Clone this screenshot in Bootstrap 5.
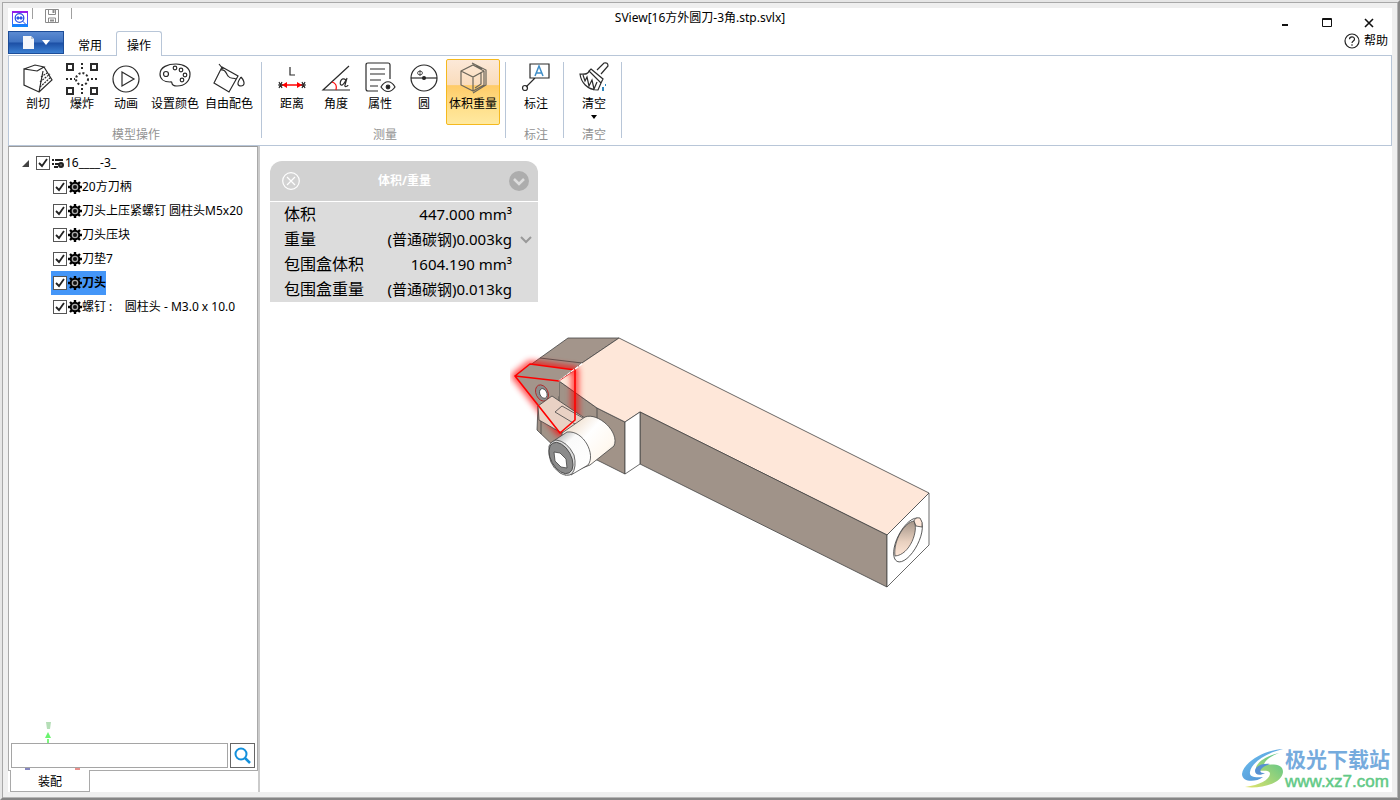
<!DOCTYPE html>
<html lang="zh-CN">
<head>
<meta charset="utf-8">
<meta name="viewport" content="width=device-width, initial-scale=1">
<title>SView[16方外圆刀-3角.stp.svlx]</title>
<link rel="stylesheet" href="https://cdn.jsdelivr.net/npm/bootstrap@5.3.0/dist/css/bootstrap.min.css">
<style>
:root { --line: #b8c6d8; --edge: #a9a9a9; }
body { font: 12px/16px "Noto Sans", "Noto Sans CJK SC", sans-serif; color: #000; background: #efefef; }
button { color: inherit; }
svg { display: block; flex: none; }
.window-frame { border: 2px solid #e6e6e6; border-right-color: #8c8c8c; border-bottom-color: #858585; box-shadow: inset 1px 1px #a8a8a8, inset -1px -1px #b5b5b5; padding: 6px; }
.title-row { display: grid; grid-template-columns: 1fr auto 1fr; height: 23px; }
.title-row h1 { font-size: 12px; font-weight: 400; line-height: 20px; margin: 0; }
.quick-sep { width: 1px; height: 11px; background: #a0a0a0; }
.plain-btn { border: 0; background: none; padding: 0; }
.tab-row { height: 24px; }
.file-btn { width: 56px; height: 23px; border: 1px solid #1d4d98; border-radius: 0; background: linear-gradient(#5b8ad1 0, #3f73c2 48%, #1c4fa5 52%, #3b7fd2 100%); }
.ribbon-tabs .nav-link { height: 24px; color: #000; padding: 5px 9px 0; border: 1px solid transparent; border-bottom: 0; border-radius: 3px 3px 0 0; line-height: 18px; }
.ribbon-tabs .nav-link.active { background: #fff; border-color: var(--line); height: 25px; margin-bottom: -1px; position: relative; padding: 5px 10px 0; }
.ribbon { border: 1px solid var(--line); height: 91px; }
.tool-group { margin: 6px 0 7px; padding: 0 5px 0 8px; border-right: 1px solid var(--line); }
.tool-group:first-child { padding-left: 7px; }
.tool-tools { height: 63px; margin-top: -3px; }
.tool-btn { width: 44px; height: 66px; border: 1px solid transparent; border-radius: 2px; background: none; padding: 2px 0 0; display: flex; flex-direction: column; align-items: center; white-space: nowrap; }
.tool-btn.wide { width: 54px; }
.tool-btn.active { border-color: #f5b91e; background: linear-gradient(#fce9d8 0, #fadcbc 39%, #ffcb68 40%, #ffe08c 75%, #ffe9a0 100%); }
.tool-btn svg { width: 34px; height: 34px; fill: none; stroke: #2b2b2b; stroke-width: 1.2; }
.tool-btn.active svg { stroke: #6b665b; }
.tool-btn svg.drop-mark { width: 6px; height: 4px; margin-top: 3px; }
.group-name { color: #929292; text-align: center; margin-top: 5px; }
.side-pane { width: 252px; border-right: 2px solid #cbcbcb; }
.tree-box { border: 1px solid var(--edge); border-top-color: #999; }
.tree-row { height: 24px; }
.tree-row label { height: 24px; padding-left: 2px; }
.tree-row label.picked { background: #4496f8; font-weight: 700; }
.tree-children { padding-left: 42px; }
.form-check-input.tree-tick { width: 14px; height: 14px; margin: 0 1px 0 0; border: 1px solid #555; border-radius: 0; background-color: #fff; flex: none; }
.form-check-input.tree-tick:checked { background-color: #fff; border-color: #555; background-size: 100%; background-image: url("data:image/svg+xml,%3Csvg xmlns='http://www.w3.org/2000/svg' viewBox='0 0 12 12'%3E%3Cpath d='M2 6l3 3 5-7' fill='none' stroke='%23222' stroke-width='1.8'/%3E%3C/svg%3E"); }
.triad { position: absolute; left: 12px; bottom: 0; }
.search-row { position: relative; padding: 0 2px 2px; gap: 2px; }
.search-row .form-control { height: 25px; border: 1px solid #a5a5a5; border-radius: 0; padding: 2px 4px; font-size: 12px; }
.search-btn { width: 25px; height: 25px; border: 1px solid #666; background: #fff; padding: 3px; flex: none; }
.dock-tab { width: 80px; height: 22px; margin-left: 2px; margin-top: -1px; background: #fff; border: 1px solid var(--edge); border-top: 0; padding: 2px 0 0; position: relative; }
.model { position: absolute; left: 250px; top: 184px; }
.measure { width: 268px; margin: 15px 0 0 10px; border-radius: 12px 12px 0 0; overflow: hidden; position: relative; }
.measure header { height: 41px; background: #d2d2d2; border-bottom: 1px solid #fff; color: #fff; padding: 0 9px 0 12px; }
.measure table { width: 100%; background: #dcdcdc; font-size: 15px; line-height: 25px; }
.measure th { font-weight: 400; font-size: 16px; padding: 0 0 0 14px; white-space: nowrap; }
.measure td { padding: 0; text-align: right; white-space: nowrap; }
.measure td:last-child { width: 26px; padding-left: 8px; }
.watermark { position: absolute; right: 2px; bottom: 0; }
.watermark b { font-size: 21px; line-height: 26px; color: #76abdd; display: block; }
.watermark span { font: 17px/20px "Liberation Sans", sans-serif; color: #62c986; -webkit-text-stroke: 0.5px #62c986; display: block; }
</style>
</head>
<body>
<svg width="0" height="0" class="position-absolute" aria-hidden="true">
  <symbol id="gear" viewBox="0 0 14 14"><path d="M7 0v14M0 7h14M2 2l10 10M12 2L2 12" stroke="#000" stroke-width="2.400"/><circle cx="7" cy="7" r="4.200" fill="none" stroke="#000" stroke-width="2.200"/><circle cx="7" cy="7" r="3.300" fill="#aaa"/><circle cx="7" cy="7" r="2" fill="#111"/></symbol>
</svg>
<div class="window-frame min-vh-100 d-flex flex-column">
<div class="bg-white flex-grow-1 d-flex flex-column">
  <header class="title-row">
    <div class="d-flex align-items-start">
      <svg class="ms-1" width="16" height="20" viewBox="0 0 16 20"><defs><linearGradient id="lg" x2="0" y2="1"><stop stop-color="#9a16e8"/><stop offset="1" stop-color="#0a8cff"/></linearGradient></defs><path d="M0 3h16v16H0z" fill="url(#lg)"/><path d="M1 5h14v11H1z" fill="#fff"/><circle cx="7.500" cy="10" r="4.300" fill="none" stroke="#2b52e5" stroke-width="1.300"/><path d="M5 9h2v2H5zM8 9h2v2H8zM10.500 13l3 3" stroke="#2b52e5" fill="#2b52e5"/></svg>
      <span class="quick-sep ms-1"></span>
      <button class="plain-btn ms-2 pe-1" aria-label="保存"><svg class="ms-1" width="14" height="15" viewBox="0 0 14 15" fill="none" stroke="#8a8a8a"><path d="M.5 1.500h13v13H.5zM3.500 1.500v5h7v-5M3.500 14v-4h7v4"/><path d="M5 12.500h4M8.500 2v3" stroke-width="2"/></svg></button>
      <span class="quick-sep ms-2"></span>
    </div>
    <h1>SView[16方外圆刀-3角.stp.svlx]</h1>
    <div class="d-flex justify-content-end align-items-start gap-4 pt-2 pe-3">
      <button class="plain-btn" aria-label="最小化"><svg width="14" height="14" stroke="#111" stroke-width="2"><path d="M4 9h6"/></svg></button>
      <button class="plain-btn px-1" aria-label="最大化"><svg width="14" height="14" fill="none" stroke="#111"><path d="M2.500 2.500h9v8h-9zM2.500 3.500h9"/></svg></button>
      <button class="plain-btn" aria-label="关闭"><svg width="14" height="14" stroke="#111" stroke-width="1.600"><path d="M3 3l8 8M11 3l-8 8"/></svg></button>
    </div>
  </header>
  <div class="tab-row d-flex">
    <button class="file-btn d-flex align-items-center justify-content-center gap-2" aria-label="文件"><svg width="11" height="13"><path d="M0 0h8l3 3v10H0z" fill="#f4f6fa"/><path d="M8 0v3h3z" fill="#b9c4d5"/></svg><svg width="8" height="5"><path d="M0 0h8L4 5z" fill="#fff"/></svg></button>
    <nav class="nav ribbon-tabs ps-1 gap-1">
      <a class="nav-link" href="#">常用</a><a class="nav-link active" href="#">操作</a>
    </nav>
    <a href="#" class="ms-auto d-flex align-items-center text-black text-decoration-none pe-1 pb-1 gap-1"><svg width="16" height="16" fill="none" stroke="#222" stroke-width="1.200"><circle cx="8" cy="8" r="7"/><path d="M5.500 6.300C5.500 3 10.500 3 10.500 6.200 10.500 8 8 7.900 8 10M8 11.300v1.400"/></svg>帮助</a>
  </div>
  <div class="ribbon d-flex">
    <section class="tool-group">
      <div class="tool-tools d-flex">
        <button class="tool-btn"><svg viewBox="0 0 34 34"><path d="M3 7l11-4 9 2-7 4-13-2v16l15 7 4-21M23 5l8 13-13 12M16 9l7-4"/><path d="M20 15l6-4M19 20l10-8M19 25l11-10" stroke-dasharray="2 1"/></svg><span>剖切</span></button>
        <button class="tool-btn"><svg viewBox="0 0 34 34"><path d="M2 2h6v6H2zM26 2h6v6h-6zM2 26h6v6H2zM26 26h6v6h-6z" stroke-width="2"/><path d="M17 1v8M17 26v8M1 17h9M26 17h9" stroke-width="2" stroke-dasharray="2 2"/><circle cx="17" cy="17" r="6" stroke-width="2" stroke-dasharray="2 2"/></svg><span>爆炸</span></button>
        <button class="tool-btn"><svg viewBox="0 0 34 34"><circle cx="17" cy="17" r="13"/><path d="M13 10l12 7-12 7z"/></svg><span>动画</span></button>
        <button class="tool-btn wide"><svg viewBox="0 0 34 34"><path d="M12 20C6 20 2 17 2 12 2 5 10 2 18 2c8 0 14 4 14 10 0 7-5 12-13 12-8 0-3-5-7-4z"/><circle cx="8" cy="12" r="2.500"/><circle cx="17" cy="6" r="1.800"/><circle cx="23" cy="8" r="1.800"/><circle cx="27" cy="13" r="1.800"/><circle cx="24" cy="18" r="1.800"/></svg><span>设置颜色</span></button>
        <button class="tool-btn wide"><svg viewBox="0 0 34 34"><path d="M7 2l4 5M10 5l16 9-9 16L2 21zM9 8c5-1 5 4 7 6 3 4 5 1 8 3M29 15c-5 7-3 9 0 9s5-3 0-9"/></svg><span>自由配色</span></button>
      </div>
      <div class="group-name">模型操作</div>
    </section>
    <section class="tool-group">
      <div class="tool-tools d-flex">
        <button class="tool-btn"><svg viewBox="0 0 34 34"><path d="M15 5v8h5"/><path d="M6 23h22" stroke="red" stroke-width="1.500"/><path d="M12 20v6l-5-3zM22 20v6l5-3z" fill="red" stroke="none"/><path d="M3 23h5M4 20l3 6M7 20l-3 6M26 23h5M27 20l3 6M30 20l-3 6"/></svg><span>距离</span></button>
        <button class="tool-btn"><svg viewBox="0 0 34 34"><path d="M31 28H4L30 4"/><path d="M13 20c4 1 5 4 4 8" stroke="red"/><path d="M28 16l-2 7c-1 3 3 1 3 0M27 18c-5-4-7 4-5 5 2 1 4-3 5-5"/></svg><span>角度</span></button>
        <button class="tool-btn"><svg viewBox="0 0 34 34"><path d="M15 29H5q-2 0-2-2V3q0-2 2-2h20q2 0 2 2v14M7 7h15M7 12h15M7 18h11M7 24h8"/><path d="M18 25c4-7 10-7 14 0-4 6-10 6-14 0z"/><circle cx="25" cy="25" r="1.800" fill="#222"/></svg><span>属性</span></button>
        <button class="tool-btn"><svg viewBox="0 0 34 34"><circle cx="17" cy="16" r="13"/><path d="M4 16h26"/><path d="M13 8v6" stroke-width=".8"/><ellipse cx="13" cy="11" rx="2.500" ry="1.800" stroke-width=".8"/><circle cx="17" cy="16" r="1.500" fill="#222"/></svg><span>圆</span></button>
        <button class="tool-btn wide active"><svg viewBox="0 0 34 34"><path d="M5 9l12-6 11 6v14l-11 6-12-6zM5 9l12 6 11-6M17 15v14M16 1l14 7v15l-13 8M20 4l6 3M25 10v12l-6 4"/></svg><span>体积重量</span></button>
      </div>
      <div class="group-name">测量</div>
    </section>
    <section class="tool-group">
      <div class="tool-tools d-flex">
        <button class="tool-btn"><svg viewBox="0 0 34 34"><path d="M11 2h19v14H11zM16 16L7 25"/><circle cx="6" cy="26" r="2.500"/><path d="M16 14l4-10 4 10M17 11h6" stroke="#3e8dc7" stroke-width="1.500"/></svg><span>标注</span></button>
      </div>
      <div class="group-name">标注</div>
    </section>
    <section class="tool-group">
      <div class="tool-tools d-flex">
        <button class="tool-btn"><svg viewBox="0 0 34 34"><path d="M20 8l7-7q4-1 4 3l-7 8M14 7l12 10-2 4L12 9zM12 9c-1 4-5 3-9 3 1 8 7 16 18 16l3-7M6 13l2 6 2-4 2 9 3-6 2 9 3-7"/><path d="M25 26h2M28 23h1M25 28h2" stroke="#3186bd" stroke-width="2"/></svg><span>清空</span><svg class="drop-mark" viewBox="0 0 6 4"><path d="M0 0h6L3 4z" fill="#000" stroke="none"/></svg></button>
      </div>
      <div class="group-name">清空</div>
    </section>
  </div>
  <main class="flex-grow-1 d-flex">
    <aside class="side-pane flex-shrink-0 d-flex flex-column">
      <div class="tree-box flex-grow-1 d-flex flex-column position-relative">
        <svg class="triad" width="64" height="50"><path d="M25 2h5l-1 7h-3z" fill="#b5deb7"/><path d="M27 19v12" stroke="#7df57f" stroke-width="2"/><path d="M27 12l-3 6h6z" fill="#6af46e"/><path d="M4 49h5" stroke="#8587bf" stroke-width="2"/><path d="M54 49h5" stroke="#e8908c" stroke-width="2"/></svg>
        <div class="flex-grow-1 pt-1">
          <div class="tree-row d-flex align-items-center ps-2"><svg class="ms-1" width="9" height="9"><path d="M8 1v7H1z" fill="#444"/></svg><label class="d-flex align-items-center ms-1"><input type="checkbox" class="form-check-input tree-tick" checked><svg width="14" height="14" stroke="#222" stroke-width="2"><path d="M1 4h2M4 4h8M1 8h2M4 8h5M3 11h4"/><circle cx="10" cy="9" r="2" fill="#666"/></svg>16____-3_</label></div>
          <div class="tree-children">
            <div class="tree-row d-flex"><label class="d-flex align-items-center"><input type="checkbox" class="form-check-input tree-tick" checked><svg width="14" height="14"><use href="#gear"/></svg>20方刀柄</label></div>
            <div class="tree-row d-flex"><label class="d-flex align-items-center"><input type="checkbox" class="form-check-input tree-tick" checked><svg width="14" height="14"><use href="#gear"/></svg>刀头上压紧螺钉 圆柱头M5x20</label></div>
            <div class="tree-row d-flex"><label class="d-flex align-items-center"><input type="checkbox" class="form-check-input tree-tick" checked><svg width="14" height="14"><use href="#gear"/></svg>刀头压块</label></div>
            <div class="tree-row d-flex"><label class="d-flex align-items-center"><input type="checkbox" class="form-check-input tree-tick" checked><svg width="14" height="14"><use href="#gear"/></svg>刀垫7</label></div>
            <div class="tree-row d-flex"><label class="d-flex align-items-center picked"><input type="checkbox" class="form-check-input tree-tick" checked><svg width="14" height="14"><use href="#gear"/></svg>刀头</label></div>
            <div class="tree-row d-flex"><label class="d-flex align-items-center"><input type="checkbox" class="form-check-input tree-tick" checked><svg width="14" height="14"><use href="#gear"/></svg>螺钉&nbsp;:&nbsp;&nbsp;&nbsp; 圆柱头 - M3.0 x 10.0</label></div>
          </div>
        </div>
        <div class="search-row d-flex">
          <input type="text" class="form-control" aria-label="搜索">
          <button class="search-btn" aria-label="搜索"><svg width="17" height="17" fill="none" stroke="#1390dc" stroke-width="2"><circle cx="7" cy="7" r="5.500"/><path d="M11 11l5 5" stroke-width="2.500"/></svg></button>
        </div>
      </div>
      <button class="dock-tab">装配</button>
    </aside>
    <section class="flex-grow-1 position-relative">
      <svg class="model" width="425" height="262" viewBox="510 330 425 262" stroke="#444" stroke-width="0.800" stroke-linejoin="round">
        <defs>
          <linearGradient id="cyl" x1="0" y1="0" x2="1" y2="1"><stop offset="0" stop-color="#fffaf3"/><stop offset=".2" stop-color="#f3e6d8"/><stop offset=".4" stop-color="#fff"/><stop offset=".7" stop-color="#fff8ef"/><stop offset="1" stop-color="#b5aba2"/></linearGradient>
          <linearGradient id="cap" x1="0" y1="0" x2=".8" y2="1"><stop offset="0" stop-color="#8c8c8c"/><stop offset=".35" stop-color="#fafafa"/><stop offset="1" stop-color="#fff"/></linearGradient>
          <linearGradient id="bore" x2="0" y2="1"><stop offset="0" stop-color="#a39488"/><stop offset=".6" stop-color="#e9d1c0"/><stop offset="1" stop-color="#fde5d6"/></linearGradient>
          <filter id="glow" x="-30%" y="-30%" width="160%" height="160%"><feGaussianBlur stdDeviation="3"/></filter>
        </defs>
        <path d="M568 338L619 338 582 363 559 381 515 376 540 358z" fill="#a3958b"/>
        <path d="M538 406L559 381 597 408 625 422V474L597 460 560 452 537 430z" fill="#a19388"/>
        <path d="M619 338L929 493 887 535 640 412 625 422 597 408 559 381 582 363z" fill="#fee7d9"/>
        <path d="M640 412L887 535V587L640 464z" fill="#a09389"/>
        <path d="M625 422L640 412V464L625 474z" fill="#fff"/>
        <path d="M887 535L929 493V545L887 587z" fill="#fff"/>
        <path d="M540 358L582 363M559 381V406M597 408V420M541 410V434" fill="none"/>
        <g transform="translate(908 540) rotate(27)"><ellipse rx="10.500" ry="24" fill="#fff"/></g>
        <path d="M895 556C893 540 905 522 914 521 919 530 910 555 895 556z" fill="url(#bore)"/>
        <path d="M914 521q1-4 6-3 3 4 2 9l-6-1z" fill="#fee7d9"/>
        <path d="M515 376L530 364 575 370V420L560 433z" fill="none" stroke="red" stroke-width="7" opacity=".75" filter="url(#glow)"/>
        <path d="M515 376L530 364 575 370 559 381z" fill="#a3958b" stroke="none"/>
        <path d="M515 376L559 381V396L540 409z" fill="#a3958b" stroke="none"/>
        <g transform="translate(542 393) rotate(-25)"><ellipse rx="6" ry="8.500" fill="#8c8c8c" stroke="#b32020"/><ellipse cx="1" cy="1" rx="3.500" ry="5" fill="#fff"/></g>
        <path d="M538 406L552 396 577 413 588 420 575 433 560 432 539 420z" fill="#e9d1c4"/>
        <path d="M555 412L562 406 583 418M555 412L580 427" fill="none"/>
        <path d="M515 376L530 364 575 370V420L560 433 515 376 559 381" fill="none" stroke="red" stroke-width="1.600"/>
        <path d="M559 381L583 363" stroke="#fff" stroke-width="1.500" stroke-dasharray="4 1"/>
        <path d="M559 381L575 370" stroke="#e22"/>
        <path d="M562 433L585 417C598 412 620 432 614 446L590 465 565 475z" fill="url(#cyl)"/>
        <path d="M552 442L567 432C584 430 596 455 588 465L571 475z" fill="url(#cap)"/>
        <path d="M549 446q2-5 7-6 11 1 18 15 3 12-2 19-5 3-12-1-13-9-11-27z" fill="#ddd"/>
        <g transform="translate(561 458) rotate(-29)"><ellipse rx="10" ry="17" fill="#8b8b8b"/></g>
        <path d="M554 452l6 1 6 6 1 9-6-1-6-6z" fill="#fff"/>
      </svg>
      <div class="measure">
        <header class="d-flex align-items-center justify-content-between">
          <button class="plain-btn" aria-label="关闭"><svg width="18" height="18" fill="none" stroke="#fff" stroke-width="1.200"><circle cx="9" cy="9" r="8.300"/><path d="M5 5l8 8M13 5l-8 8"/></svg></button>
          <b>体积/重量</b>
          <button class="plain-btn" aria-label="收起"><svg width="20" height="20" fill="none"><circle cx="10" cy="10" r="10" fill="#adadad"/><path d="M5 8l5 5 5-5" stroke="#ddd" stroke-width="2.500"/></svg></button>
        </header>
        <table>
          <tr><th scope="row">体积</th><td>447.000 mm³</td><td></td></tr>
          <tr><th scope="row">重量</th><td>(普通碳钢)0.003kg</td><td><button class="plain-btn d-block" aria-label="选择材料"><svg width="12" height="8" fill="none" stroke="#999" stroke-width="2"><path d="M1 1l5 5 5-5"/></svg></button></td></tr>
          <tr><th scope="row">包围盒体积</th><td>1604.190 mm³</td><td></td></tr>
          <tr><th scope="row">包围盒重量</th><td>(普通碳钢)0.013kg</td><td></td></tr>
        </table>
      </div>
      <div class="watermark d-flex align-items-center">
        <svg width="44" height="42" viewBox="0 0 44 42"><defs><linearGradient id="wa" x2="1" y2="1"><stop stop-color="#6fc4f2"/><stop offset="1" stop-color="#4a86cc"/></linearGradient><linearGradient id="wb" x1="1" x2="0" y2="1"><stop stop-color="#4fc28b"/><stop offset="1" stop-color="#e4e46a"/></linearGradient></defs><path d="M42 1C22 2 2 15 1 26c0 8 13 9 21 3-8 1-14 0-13-5C10 15 25 5 42 1z" fill="url(#wa)"/><path d="M38 5C24 8 14 16 15 21c2 4 14-1 14 5-1 6-10 11-25 13 15 2 37-3 38-15 0-8-9-8-19-7 0-4 7-9 15-12z" fill="url(#wb)"/><path d="M29 16c-9-1-15 3-15 7s5 5 10 2c-8 1-5-6 5-9z" fill="#5791d2"/></svg>
        <div><b>极光下载站</b><span>www.xz7.com</span></div>
      </div>
    </section>
  </main>
</div>
</div>
<script src="https://cdn.jsdelivr.net/npm/bootstrap@5.3.0/dist/js/bootstrap.bundle.min.js"></script>
</body>
</html>
